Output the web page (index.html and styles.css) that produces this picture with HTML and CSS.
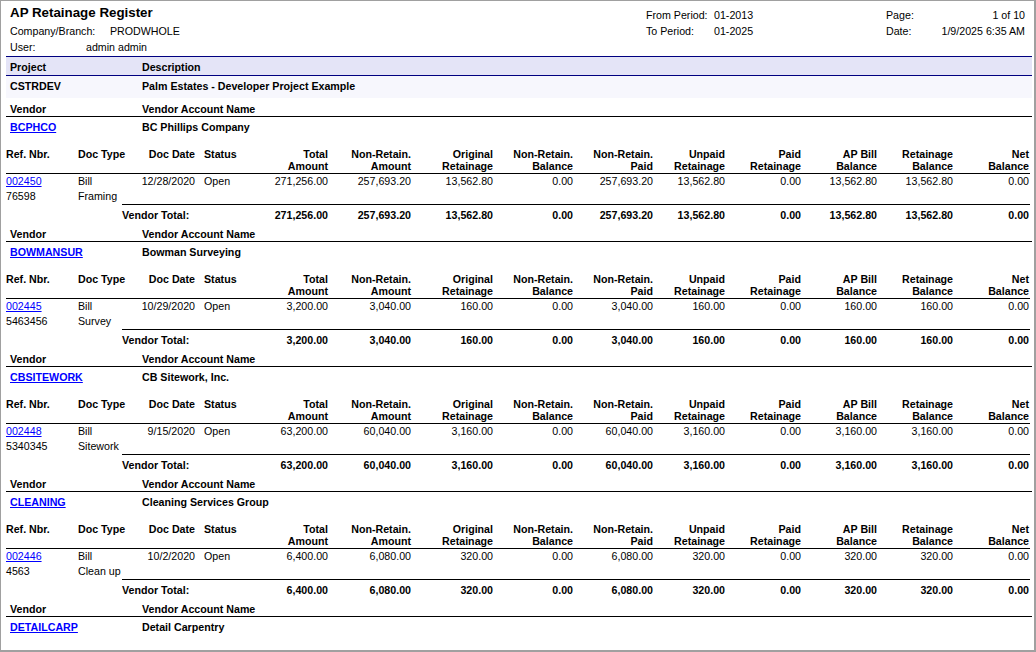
FILE: index.html
```html
<!DOCTYPE html>
<html>
<head>
<meta charset="utf-8">
<title>AP Retainage Register</title>
<link rel="stylesheet" href="styles.css">
</head>
<body>
<div class="page">
  <header class="top">
    <div class="top-left">
      <div class="title">AP Retainage Register</div>
      <div class="kv"><span class="k k-company">Company/Branch:</span><span>PRODWHOLE</span></div>
      <div class="kv"><span class="k k-user">User:</span><span>admin admin</span></div>
    </div>
    <div class="top-mid">
      <div class="kv"><span class="k k-period">From Period:</span><span>01-2013</span></div>
      <div class="kv"><span class="k k-period">To Period:</span><span>01-2025</span></div>
    </div>
    <div class="top-right">
      <div class="kv spread"><span>Page:</span><span>1 of 10</span></div>
      <div class="kv spread"><span>Date:</span><span>1/9/2025 6:35 AM</span></div>
    </div>
  </header>

  <div class="pair project-head"><div class="c1">Project</div><div>Description</div></div>
  <div class="pair project-row"><div class="c1">CSTRDEV</div><div>Palm Estates - Developer Project Example</div></div>

  <section class="vendor">
    <div class="pair vendor-head"><div class="c1">Vendor</div><div>Vendor Account Name</div></div>
    <div class="pair vendor-row"><div class="c1"><a href="#" class="vlink">BCPHCO</a></div><div>BC Phillips Company</div></div>
    <div class="doc-grid doc-head">
      <div>Ref. Nbr.</div><div>Doc Type</div><div class="r">Doc Date</div><div class="st">Status</div>
      <div class="r">Total<br>Amount</div><div class="r">Non-Retain.<br>Amount</div><div class="r">Original<br>Retainage</div><div class="r">Non-Retain.<br>Balance</div><div class="r">Non-Retain.<br>Paid</div><div class="r">Unpaid<br>Retainage</div><div class="r">Paid<br>Retainage</div><div class="r">AP Bill<br>Balance</div><div class="r">Retainage<br>Balance</div><div class="r">Net<br>Balance</div>
    </div>
    <div class="doc-grid doc-row">
      <div><a href="#" class="rlink">002450</a><br>76598</div><div>Bill<br>Framing</div><div class="r">12/28/2020</div><div class="st">Open</div>
      <div class="r">271,256.00</div><div class="r">257,693.20</div><div class="r">13,562.80</div><div class="r">0.00</div><div class="r">257,693.20</div><div class="r">13,562.80</div><div class="r">0.00</div><div class="r">13,562.80</div><div class="r">13,562.80</div><div class="r">0.00</div>
    </div>
    <div class="total-grid">
      <div>Vendor Total:</div><div class="r">271,256.00</div><div class="r">257,693.20</div><div class="r">13,562.80</div><div class="r">0.00</div><div class="r">257,693.20</div><div class="r">13,562.80</div><div class="r">0.00</div><div class="r">13,562.80</div><div class="r">13,562.80</div><div class="r">0.00</div>
    </div>
  </section>

  <section class="vendor">
    <div class="pair vendor-head"><div class="c1">Vendor</div><div>Vendor Account Name</div></div>
    <div class="pair vendor-row"><div class="c1"><a href="#" class="vlink">BOWMANSUR</a></div><div>Bowman Surveying</div></div>
    <div class="doc-grid doc-head">
      <div>Ref. Nbr.</div><div>Doc Type</div><div class="r">Doc Date</div><div class="st">Status</div>
      <div class="r">Total<br>Amount</div><div class="r">Non-Retain.<br>Amount</div><div class="r">Original<br>Retainage</div><div class="r">Non-Retain.<br>Balance</div><div class="r">Non-Retain.<br>Paid</div><div class="r">Unpaid<br>Retainage</div><div class="r">Paid<br>Retainage</div><div class="r">AP Bill<br>Balance</div><div class="r">Retainage<br>Balance</div><div class="r">Net<br>Balance</div>
    </div>
    <div class="doc-grid doc-row">
      <div><a href="#" class="rlink">002445</a><br>5463456</div><div>Bill<br>Survey</div><div class="r">10/29/2020</div><div class="st">Open</div>
      <div class="r">3,200.00</div><div class="r">3,040.00</div><div class="r">160.00</div><div class="r">0.00</div><div class="r">3,040.00</div><div class="r">160.00</div><div class="r">0.00</div><div class="r">160.00</div><div class="r">160.00</div><div class="r">0.00</div>
    </div>
    <div class="total-grid">
      <div>Vendor Total:</div><div class="r">3,200.00</div><div class="r">3,040.00</div><div class="r">160.00</div><div class="r">0.00</div><div class="r">3,040.00</div><div class="r">160.00</div><div class="r">0.00</div><div class="r">160.00</div><div class="r">160.00</div><div class="r">0.00</div>
    </div>
  </section>

  <section class="vendor">
    <div class="pair vendor-head"><div class="c1">Vendor</div><div>Vendor Account Name</div></div>
    <div class="pair vendor-row"><div class="c1"><a href="#" class="vlink">CBSITEWORK</a></div><div>CB Sitework, Inc.</div></div>
    <div class="doc-grid doc-head">
      <div>Ref. Nbr.</div><div>Doc Type</div><div class="r">Doc Date</div><div class="st">Status</div>
      <div class="r">Total<br>Amount</div><div class="r">Non-Retain.<br>Amount</div><div class="r">Original<br>Retainage</div><div class="r">Non-Retain.<br>Balance</div><div class="r">Non-Retain.<br>Paid</div><div class="r">Unpaid<br>Retainage</div><div class="r">Paid<br>Retainage</div><div class="r">AP Bill<br>Balance</div><div class="r">Retainage<br>Balance</div><div class="r">Net<br>Balance</div>
    </div>
    <div class="doc-grid doc-row">
      <div><a href="#" class="rlink">002448</a><br>5340345</div><div>Bill<br>Sitework</div><div class="r">9/15/2020</div><div class="st">Open</div>
      <div class="r">63,200.00</div><div class="r">60,040.00</div><div class="r">3,160.00</div><div class="r">0.00</div><div class="r">60,040.00</div><div class="r">3,160.00</div><div class="r">0.00</div><div class="r">3,160.00</div><div class="r">3,160.00</div><div class="r">0.00</div>
    </div>
    <div class="total-grid">
      <div>Vendor Total:</div><div class="r">63,200.00</div><div class="r">60,040.00</div><div class="r">3,160.00</div><div class="r">0.00</div><div class="r">60,040.00</div><div class="r">3,160.00</div><div class="r">0.00</div><div class="r">3,160.00</div><div class="r">3,160.00</div><div class="r">0.00</div>
    </div>
  </section>

  <section class="vendor">
    <div class="pair vendor-head"><div class="c1">Vendor</div><div>Vendor Account Name</div></div>
    <div class="pair vendor-row"><div class="c1"><a href="#" class="vlink">CLEANING</a></div><div>Cleaning Services Group</div></div>
    <div class="doc-grid doc-head">
      <div>Ref. Nbr.</div><div>Doc Type</div><div class="r">Doc Date</div><div class="st">Status</div>
      <div class="r">Total<br>Amount</div><div class="r">Non-Retain.<br>Amount</div><div class="r">Original<br>Retainage</div><div class="r">Non-Retain.<br>Balance</div><div class="r">Non-Retain.<br>Paid</div><div class="r">Unpaid<br>Retainage</div><div class="r">Paid<br>Retainage</div><div class="r">AP Bill<br>Balance</div><div class="r">Retainage<br>Balance</div><div class="r">Net<br>Balance</div>
    </div>
    <div class="doc-grid doc-row">
      <div><a href="#" class="rlink">002446</a><br>4563</div><div>Bill<br>Clean up</div><div class="r">10/2/2020</div><div class="st">Open</div>
      <div class="r">6,400.00</div><div class="r">6,080.00</div><div class="r">320.00</div><div class="r">0.00</div><div class="r">6,080.00</div><div class="r">320.00</div><div class="r">0.00</div><div class="r">320.00</div><div class="r">320.00</div><div class="r">0.00</div>
    </div>
    <div class="total-grid">
      <div>Vendor Total:</div><div class="r">6,400.00</div><div class="r">6,080.00</div><div class="r">320.00</div><div class="r">0.00</div><div class="r">6,080.00</div><div class="r">320.00</div><div class="r">0.00</div><div class="r">320.00</div><div class="r">320.00</div><div class="r">0.00</div>
    </div>
  </section>

  <section class="vendor">
    <div class="pair vendor-head"><div class="c1">Vendor</div><div>Vendor Account Name</div></div>
    <div class="pair vendor-row"><div class="c1"><a href="#" class="vlink">DETAILCARP</a></div><div>Detail Carpentry</div></div>
  </section>
</div>
</body>
</html>
```

FILE: styles.css
```css
* { box-sizing: border-box; }
html, body { margin: 0; padding: 0; background: #fff; }
body {
  font-family: "Liberation Sans", Arial, sans-serif;
  font-size: 8pt;
  color: #000;
}
.page {
  width: 1036px;
  height: 652px;
  overflow: hidden;
  border-top: 1px solid #a0a0a0;
  border-left: 1px solid #a0a0a0;
  border-right: 2px solid #a0a0a0;
  border-bottom: 2px solid #a0a0a0;
  padding: 0 2px 0 5px;
}
a { color: #0000ff; text-decoration: underline; }
.vlink { font-weight: bold; }

/* header */
.top {
  display: flex;
  height: 55px;
}
.top-left { width: 640px; padding-left: 4px; }
.title {
  font-size: 10pt;
  font-weight: bold;
  padding-top: 1px;
  line-height: 21px;
  height: 22px;
}
.kv { display: flex; line-height: 16px; height: 16px; white-space: nowrap; }
.k-company { width: 100px; }
.k-user { width: 76px; }
.top-mid { width: 240px; padding-top: 6px; }
.k-period { width: 68px; }
.top-right { width: 139px; padding-top: 6px; }
.spread { justify-content: space-between; }

/* project */
.pair {
  display: grid;
  grid-template-columns: 136px 1fr;
  font-weight: bold;
}
.pair .c1 { padding-left: 4px; }
.project-head {
  border-top: 1px solid #000080;
  border-bottom: 1px solid #000080;
  background: #e4e4f7;
  padding-top: 2px;
  line-height: 16px;
  height: 20px;
}
.project-row {
  background: #f7f7fd;
  line-height: 20px;
  height: 22px;
}

/* vendor */
.vendor-head {
  padding-top: 3px;
  line-height: 14px;
  height: 18px;
  border-bottom: 1px solid #000;
}
.vendor:first-of-type .vendor-head { margin-top: 1px; }
.vendor-row {
  line-height: 20px;
  height: 20px;
}

.doc-grid {
  display: grid;
  grid-template-columns: 72px 52px 65px 55px 78px 83px 82px 80px 80px 72px 76px 76px 76px 76px;
  width: 1024px;
  white-space: nowrap;
}
.r { text-align: right; }
.st { padding-left: 9px; }
.doc-head {
  font-weight: bold;
  line-height: 12px;
  padding-top: 11px;
  padding-bottom: 1px;
  height: 37px;
  border-bottom: 1px solid #000;
}
.doc-row {
  line-height: 15px;
  height: 30px;
}
.total-grid {
  display: grid;
  grid-template-columns: 128px 78px 83px 82px 80px 80px 72px 76px 76px 76px 76px;
  margin-left: 116px;
  width: 908px;
  border-top: 1px solid #000;
  font-weight: bold;
  padding-top: 1px;
  line-height: 18px;
  height: 20px;
  white-space: nowrap;
}
```
